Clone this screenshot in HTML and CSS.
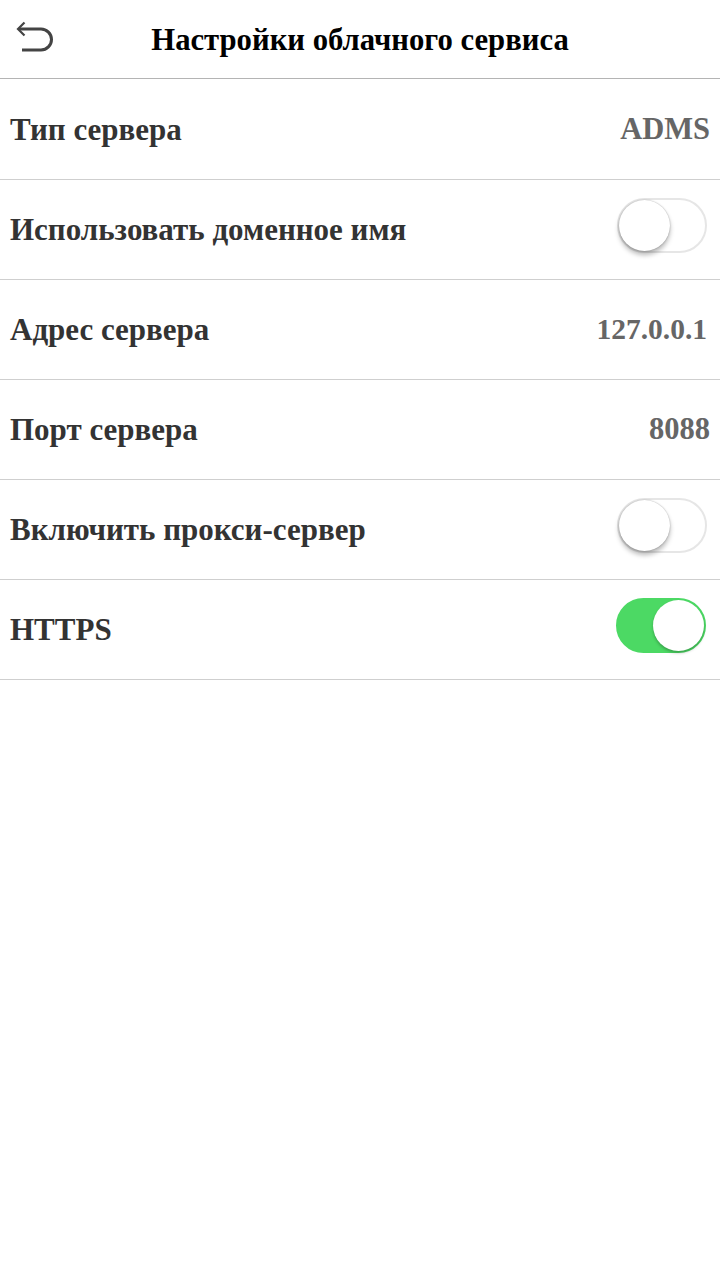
FILE: index.html
```html
<!DOCTYPE html>
<html lang="ru">
<head>
<meta charset="utf-8">
<link rel="stylesheet" href="styles.css">
</head>
<body>
<div class="page">
  <header class="topbar">
    <button class="back" aria-label="Назад">
      <svg width="40" height="36" viewBox="0 0 40 36">
        <path d="M5 10 H27 A10.5 10.5 0 0 1 27 31 H8" fill="none" stroke="#444" stroke-width="3"/>
        <path d="M10.5 3.5 L4 10 L10.5 16.5" fill="none" stroke="#444" stroke-width="2.2" stroke-linejoin="miter"/>
      </svg>
    </button>
    <h1 class="title">Настройки облачного сервиса</h1>
  </header>
  <ul class="list">
    <li class="row"><span class="label">Тип сервера</span><span class="value">ADMS</span></li>
    <li class="row"><span class="label">Использовать доменное имя</span><span class="switch"><span class="knob"></span></span></li>
    <li class="row"><span class="label">Адрес сервера</span><span class="value ip">127.0.0.1</span></li>
    <li class="row"><span class="label">Порт сервера</span><span class="value">8088</span></li>
    <li class="row"><span class="label">Включить прокси-сервер</span><span class="switch"><span class="knob"></span></span></li>
    <li class="row"><span class="label">HTTPS</span><span class="switch on"><span class="knob"></span></span></li>
  </ul>
</div>
</body>
</html>
```

FILE: styles.css
```css
* { box-sizing: border-box; }
html, body { margin: 0; padding: 0; background: #fff; }
body { font-family: "Liberation Serif", "Times New Roman", serif; }
.page { width: 720px; min-height: 1280px; }
.topbar {
  position: relative;
  height: 79px;
  border-bottom: 1px solid #b4b4b4;
  display: flex;
  align-items: center;
  justify-content: center;
}
.back {
  position: absolute;
  left: 14px;
  top: 19px;
  padding: 0;
  border: 0;
  background: none;
  width: 40px;
  height: 36px;
}
.back svg { display: block; }
.title {
  margin: 0;
  font-size: 30.7px;
  font-weight: bold;
  color: #000;
  padding-top: 2px;
}
.list { list-style: none; margin: 0; padding: 1px 0 0 0; }
.row {
  height: 100px;
  border-bottom: 1px solid #cfcfcf;
  display: flex;
  align-items: center;
  justify-content: space-between;
  padding: 0 10px 0 10px;
}
.label { font-size: 31px; font-weight: bold; color: #333; }
.value { font-size: 30.5px; font-weight: bold; color: #666; }
.value.ip { font-size: 29.5px; margin-right: 3px; }
.switch {
  position: relative;
  width: 90px;
  height: 55px;
  border-radius: 28px;
  border: 2.5px solid #e6e6e6;
  background: #fff;
  margin-right: 3px;
  margin-bottom: 8px;
}
.switch .knob {
  position: absolute;
  left: -0.5px;
  top: -0.5px;
  width: 51px;
  height: 51px;
  border-radius: 50%;
  background: #fff;
  box-shadow: 0 4px 5px rgba(0,0,0,0.28), 0 0 1.5px rgba(0,0,0,0.35);
}
.switch.on {
  background: #4cd964;
  border-color: #4cd964;
  margin-right: 4px;
}
.switch.on .knob {
  left: 35px;
  box-shadow: 0 2px 3px rgba(0,0,0,0.25);
}
```
